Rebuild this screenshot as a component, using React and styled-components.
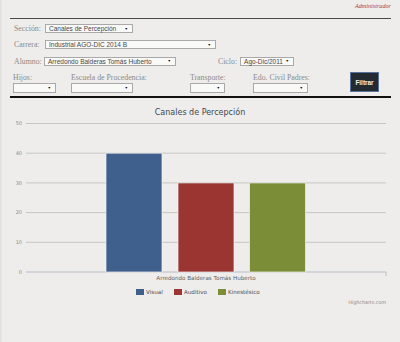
import React from 'react'
import styled, { createGlobalStyle } from 'styled-components'

const Global = createGlobalStyle`
  html, body { margin: 0; padding: 0; background: #eeedeb; }
  * { box-sizing: border-box; }
`

const Page = styled.div`
  width: 400px;
  height: 342px;
  background: #eeedeb;
  border-left: 2px solid #e4e3e1;
  overflow: hidden;
`

const Header = styled.div`
  height: 18px;
  padding: 2px 9px 0 0;
  text-align: right;
  font-size: 6.2px;
  line-height: 8px;
`

const Admin = styled.span`
  font-family: "Liberation Serif", serif;
  font-style: italic;
  font-size: 6.2px;
  color: #b5383a;
`

const Rule = styled.div`
  margin: 0 9px 0 8px;
  height: ${p => p.$thick ? 2 : 1}px;
  background: ${p => p.$thick ? '#111' : '#4a4a4a'};
`

const Form = styled.div`
  padding: 5px 0 0 11px;
  height: 77px;
`

const Row = styled.div`
  display: flex;
  align-items: center;
  height: 9px;
  margin-bottom: 7.4px;
`

const Label = styled.span`
  font-family: "Liberation Serif", serif;
  font-size: 7.8px;
  line-height: 9px;
  color: #8a8a8a;
  width: ${p => p.$w ? p.$w + 'px' : 'auto'};
  margin-left: ${p => p.$ml || 0}px;
  padding-left: ${p => p.$pl || 0}px;
  white-space: nowrap;
`

const Select = styled.div`
  position: relative;
  width: ${p => p.$w}px;
  height: ${p => p.$h || 9}px;
  background: #f9f9f8;
  border: 1px solid #a9a9a9;
  font-family: "Liberation Sans", Arial, sans-serif;
  font-size: 6.5px;
  line-height: 7px;
  color: #474747;
  padding-left: 3px;
  white-space: nowrap;
  margin-left: ${p => p.$ml || 0}px;
`

const Arrow = styled.span`
  position: absolute;
  right: 4px;
  top: 1.5px;
  font-size: 3.6px;
  line-height: 4px;
  color: #111;
`

const FilterRow = styled.div`
  display: flex;
  align-items: flex-start;
  margin-top: 7px;
`

const Group = styled.div`
  width: ${p => p.$w}px;
  display: flex;
  flex-direction: column;
  gap: 1px;
`

const Button = styled.button`
  margin-top: -1px;
  width: 29px;
  height: 20px;
  padding: 0;
  background: #232b31;
  border: 1px solid #55739c;
  color: #f4f4f4;
  font-family: "Liberation Sans", Arial, sans-serif;
  font-weight: bold;
  font-size: 6.4px;
`

const Chart = styled.svg`
  display: block;
  margin-left: -2px;
  font-family: "DejaVu Sans", Verdana, sans-serif;
`

function Drop({ w, children, ml, h }) {
  return (
    <Select $w={w} $ml={ml} $h={h}>
      {children}
      <Arrow>▼</Arrow>
    </Select>
  )
}

const grid = [50, 40, 30, 20, 10, 0]
const yOf = v => 272 - v * 2.97

const bars = [
  { x: 106, v: 40, color: '#3f5f8d' },
  { x: 178, v: 30, color: '#9b3532' },
  { x: 249.5, v: 30, color: '#7b8e37' },
]

const legend = [
  { x: 136, label: 'Visual', color: '#3f5f8d' },
  { x: 174, label: 'Auditivo', color: '#9b3532' },
  { x: 218, label: 'Kinestésico', color: '#7b8e37' },
]

export default function App() {
  return (
    <Page>
      <Global />
      <Header>
        <Admin>Administrador</Admin>
      </Header>
      <Rule />
      <Form>
        <Row>
          <Label $w={32} $pl={1}>Sección:</Label>
          <Drop w={88}>Canales de Percepción</Drop>
        </Row>
        <Row>
          <Label $w={32} $pl={1}>Carrera:</Label>
          <Drop w={171}>Industrial AGO-DIC 2014 B</Drop>
        </Row>
        <Row>
          <Label $w={31} $pl={1}>Alumno:</Label>
          <Drop w={132}>Arredondo Balderas Tomás Huberto</Drop>
          <Label $ml={42}>Ciclo:</Label>
          <Drop w={54} ml={3}>Ago-Dic/2011</Drop>
        </Row>
        <FilterRow>
          <Group $w={58}>
            <Label>Hijos:</Label>
            <Drop w={43} h={10} />
          </Group>
          <Group $w={119}>
            <Label>Escuela de Procedencia:</Label>
            <Drop w={62} h={10} />
          </Group>
          <Group $w={63}>
            <Label>Transporte:</Label>
            <Drop w={35} h={10} />
          </Group>
          <Group $w={97}>
            <Label>Edo. Civil Padres:</Label>
            <Drop w={55} h={10} />
          </Group>
          <Button>Filtrar</Button>
        </FilterRow>
      </Form>
      <Rule $thick />
      <Chart width="400" height="215" viewBox="0 98 400 215">
        <text x="200" y="115" textAnchor="middle" fontSize="8" fill="#3c4652">
          Canales de Percepción
        </text>
        {grid.map(v => (
          <g key={v}>
            <line x1="26" x2="386" y1={yOf(v)} y2={yOf(v)} stroke={v === 0 ? '#b8bec6' : '#c6c5c3'} strokeWidth="1" />
            <text x="22" y={yOf(v) + 1.8} textAnchor="end" fontSize="5" fill="#8c8c8c">{v}</text>
          </g>
        ))}
        <line x1="386" x2="386" y1="272" y2="276" stroke="#b8bec6" />
        {bars.map(b => (
          <rect key={b.x} x={b.x} y={yOf(b.v)} width="56" height={272 - yOf(b.v)} fill={b.color} stroke="#f4f4f4" strokeOpacity="0.7" strokeWidth="1" />
        ))}
        <text x="206" y="279.5" textAnchor="middle" fontSize="5.6" fill="#606060">
          Arredondo Balderas Tomás Huberto
        </text>
        {legend.map(l => (
          <g key={l.label}>
            <rect x={l.x} y="289" width="8" height="6" fill={l.color} />
            <text x={l.x + 10} y="294.3" fontSize="5.6" fill="#4c4c4c">{l.label}</text>
          </g>
        ))}
        <text x="386" y="304" textAnchor="end" fontSize="4.8" fill="#8a8a8a">Highcharts.com</text>
      </Chart>
    </Page>
  )
}
